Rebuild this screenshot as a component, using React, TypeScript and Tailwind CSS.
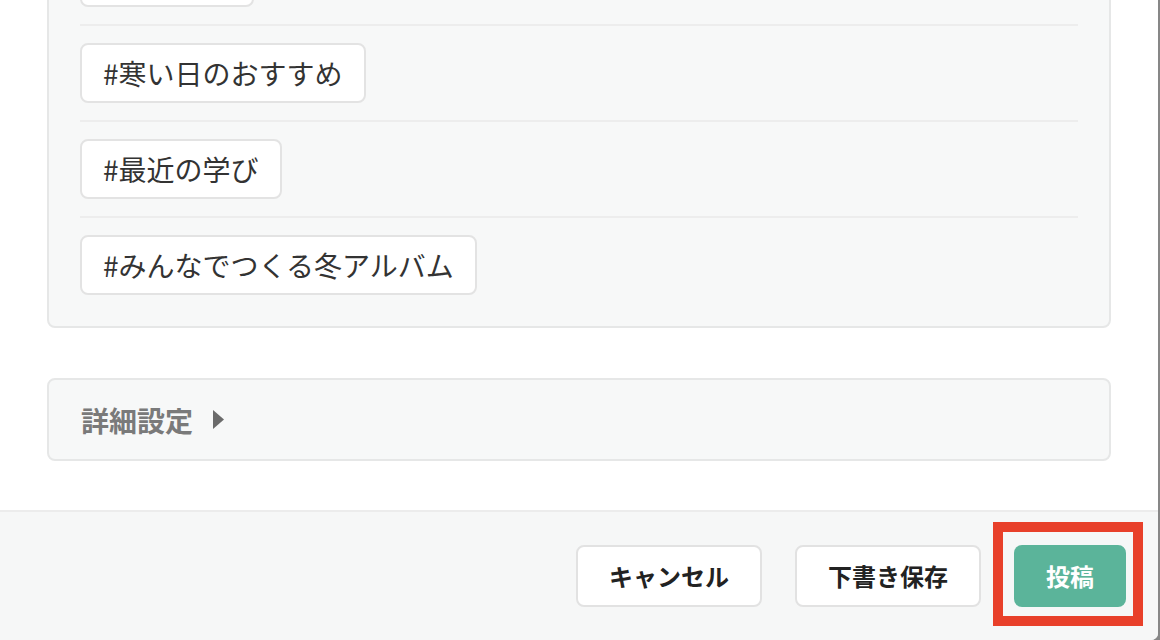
import React from "react";

const tags = ["#冬の景色", "#寒い日のおすすめ", "#最近の学び", "#みんなでつくる冬アルバム"];

export default function App() {
  return (
    <div
      className="w-[1160px] h-[640px] bg-[#878787] overflow-hidden"
      style={{ fontFamily: '"Noto Sans CJK JP", "Noto Sans", sans-serif' }}
    >
      <div className="w-[1158px] h-[640px] bg-white rounded-br-[7px] overflow-hidden flex flex-col">
        <div className="h-[510px] px-[47px] flex flex-col shrink-0">
          <div className="mt-[-72px] border-2 border-[#e6e7e7] bg-[#f7f8f8] rounded-[8px] px-[31px] pb-[14px]">
            {tags.map((t, i) => (
              <div
                key={t}
                className={
                  i < tags.length - 1
                    ? "py-[17px] border-b-2 border-[#ededed] flex"
                    : "py-[17px] flex"
                }
              >
                <div className="h-[60px] px-[21px] flex items-center bg-white border-2 border-[#e3e3e3] rounded-[8px] text-[28px] text-[#333333] leading-none">
                  {t}
                </div>
              </div>
            ))}
          </div>
          <div className="mt-[50px] h-[83px] border-2 border-[#e6e7e7] bg-[#f7f8f8] rounded-[8px] px-[32px] flex items-center gap-[20px]">
            <span className="text-[28px] font-bold text-[#7a7a7a] leading-none">詳細設定</span>
            <svg width="11" height="19" viewBox="0 0 11 19">
              <path d="M0 0 L11 9.5 L0 19 Z" fill="#6b6b6b" />
            </svg>
          </div>
        </div>
        <div className="flex-1 border-t-2 border-[#ececec] bg-[#f6f7f7] flex justify-end items-start pt-[33px] pr-[32px] gap-[33px]">
          <button className="w-[186px] h-[62px] bg-white border-2 border-[#e2e2e2] rounded-[8px] text-[24px] font-bold text-[#222222] flex items-center justify-center">
            キャンセル
          </button>
          <button className="w-[186px] h-[62px] bg-white border-2 border-[#e2e2e2] rounded-[8px] text-[24px] font-bold text-[#222222] flex items-center justify-center">
            下書き保存
          </button>
          <div className="relative">
            <button className="w-[112px] h-[62px] bg-[#5bb49a] rounded-[8px] text-[24px] font-bold text-white flex items-center justify-center">
              投稿
            </button>
            <div className="absolute left-[-21px] top-[-23px] w-[150px] h-[104px] border-[10px] border-[#e8402a] pointer-events-none" />
          </div>
        </div>
      </div>
    </div>
  );
}
